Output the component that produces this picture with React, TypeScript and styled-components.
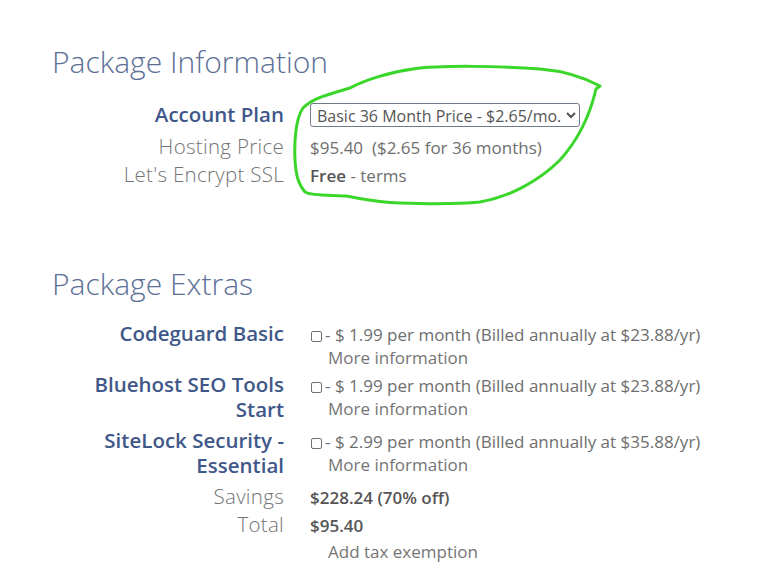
import React from 'react';
import styled, { createGlobalStyle } from 'styled-components';

const GlobalStyle = createGlobalStyle`
  body {
    margin: 0;
    background: #ffffff;
    font-family: 'Open Sans', 'Noto Sans', sans-serif;
  }
`;

const Page = styled.div`
  position: relative;
  width: 774px;
  height: 580px;
  padding: 44px 0 0 52px;
  box-sizing: border-box;
  overflow: hidden;
`;

const SectionTitle = styled.h2<{ $top?: number }>`
  margin: ${(props) => props.$top || 0}px 0 0 0;
  font-size: 30px;
  line-height: 35px;
  font-weight: 300;
  color: #5c6f96;
`;

const Row = styled.div<{ $top?: number; $center?: boolean }>`
  display: grid;
  grid-template-columns: 232px 1fr;
  column-gap: 26px;
  align-items: ${(props) => (props.$center ? 'center' : 'baseline')};
  margin-top: ${(props) => props.$top || 0}px;
`;

const Label = styled.div<{ $strong?: boolean }>`
  text-align: right;
  font-size: 20.5px;
  line-height: 25px;
  letter-spacing: ${(props) => (props.$strong ? 0 : 0.3)}px;
  font-weight: ${(props) => (props.$strong ? 600 : 300)};
  color: ${(props) => (props.$strong ? '#405889' : '#747474')};
`;

const Value = styled.div`
  font-size: 17px;
  line-height: 23px;
  color: #6e6e6e;
`;

const Bold = styled.span`
  font-weight: 600;
  color: #555555;
`;

const PlanSelect = styled.select`
  width: 270px;
  height: 24px;
  padding: 0 2px;
  border: 1px solid #6f7b88;
  border-radius: 3px;
  background: #ffffff;
  font-family: 'Open Sans', 'Noto Sans', sans-serif;
  font-size: 16px;
  color: #555555;
`;

const Check = styled.input`
  appearance: none;
  width: 11px;
  height: 11px;
  margin: 0 3px 0 1px;
  border: 1px solid #707070;
  border-radius: 2px;
  vertical-align: -1px;
`;

const SubLink = styled.div`
  margin-left: 18px;
  color: #757575;
`;

const Scribble = styled.svg`
  position: absolute;
  top: 0;
  left: 0;
  pointer-events: none;
`;

type Extra = { name: string; monthly: string; yearly: string; top: number };

const extras: Extra[] = [
  { name: 'Codeguard Basic', monthly: '1.99', yearly: '23.88', top: 20 },
  { name: 'Bluehost SEO Tools Start', monthly: '1.99', yearly: '23.88', top: 3 },
  { name: 'SiteLock Security - Essential', monthly: '2.99', yearly: '35.88', top: 6 },
];

function ExtraRow({ extra }: { extra: Extra }) {
  return (
    <Row $top={extra.top}>
      <Label $strong>{extra.name}</Label>
      <Value>
        <Check type="checkbox" />- $ {extra.monthly} per month (Billed annually at ${extra.yearly}/yr)
        <SubLink>More information</SubLink>
      </Value>
    </Row>
  );
}

export default function App() {
  return (
    <Page>
      <GlobalStyle />
      <SectionTitle>Package Information</SectionTitle>
      <Row $center $top={23}>
        <Label $strong>Account Plan</Label>
        <div>
          <PlanSelect defaultValue="36">
            <option value="36">Basic 36 Month Price - $2.65/mo.</option>
          </PlanSelect>
        </div>
      </Row>
      <Row $top={7}>
        <Label>Hosting Price</Label>
        <Value>$95.40&nbsp; ($2.65 for 36 months)</Value>
      </Row>
      <Row $top={3}>
        <Label>Let's Encrypt SSL</Label>
        <Value>
          <Bold>Free</Bold> - terms
        </Value>
      </Row>

      <SectionTitle $top={79}>Package Extras</SectionTitle>
      {extras.map((extra) => (
        <ExtraRow extra={extra} key={extra.name} />
      ))}
      <Row $top={6}>
        <Label>Savings</Label>
        <Value>
          <Bold>$228.24 (70% off)</Bold>
        </Value>
      </Row>
      <Row $top={3}>
        <Label>Total</Label>
        <Value>
          <Bold>$95.40</Bold>
        </Value>
      </Row>
      <Row $top={3}>
        <Label />
        <Value>
          <SubLink>Add tax exemption</SubLink>
        </Value>
      </Row>

      <Scribble width="774" height="580" viewBox="0 0 774 580">
        <path
          d="M600 86 C585 78 565 71 540 69 C500 66 440 65 413 69 C390 72 365 80 350 88 C330 94 312 98 303 108 C296 118 294 140 295 160 C296 175 298 184 305 192 C312 196 330 195 345 196 C360 198 372 202 400 203 C430 204 460 204 480 202 C510 197 540 180 560 160 C578 140 590 115 596 89 L600 86"
          fill="none"
          stroke="#3ad62a"
          strokeWidth="3"
          strokeLinecap="round"
          strokeLinejoin="round"
        />
      </Scribble>
    </Page>
  );
}
